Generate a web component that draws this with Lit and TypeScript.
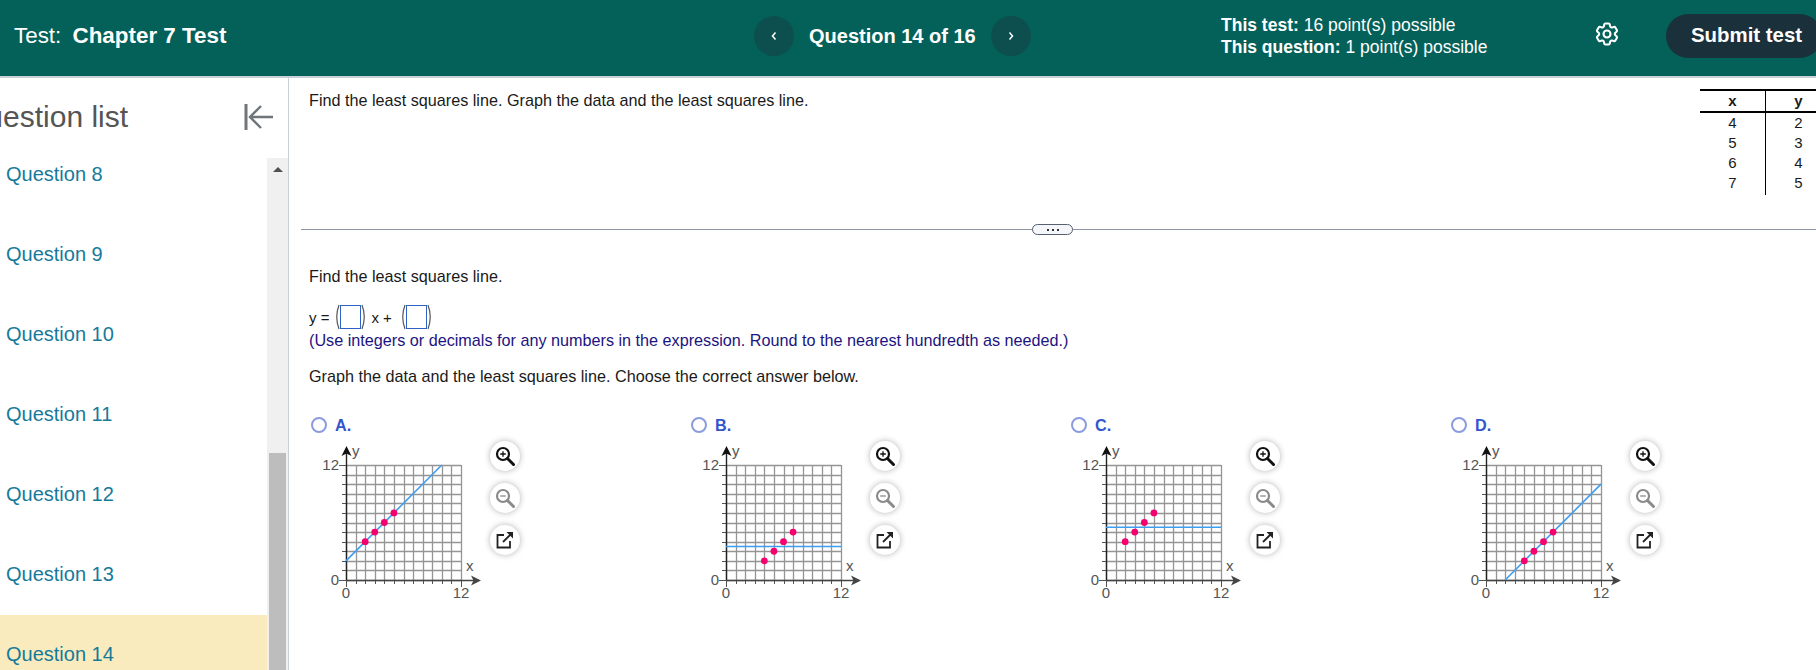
import { LitElement, html, css, svg } from 'lit';
import { customElement, property } from 'lit/decorators.js';

const UNIT = 115 / 12;
const X0 = 35;
const Y0 = 139;
const px = (x: number) => X0 + x * UNIT;
const py = (y: number) => Y0 - y * UNIT;
// grid lines in the original land on whole pixels
const snap = (v: number) => Math.round(v) + 0.5;

const OPTIONS = [
  { key: 'A', line: [0, 2, 10, 12], points: [[2, 4], [3, 5], [4, 6], [5, 7]] },
  { key: 'B', line: [0, 3.5, 12, 3.5], points: [[4, 2], [5, 3], [6, 4], [7, 5]] },
  { key: 'C', line: [0, 5.5, 12, 5.5], points: [[2, 4], [3, 5], [4, 6], [5, 7]] },
  { key: 'D', line: [2, 0, 12, 10], points: [[4, 2], [5, 3], [6, 4], [7, 5]] },
];

@customElement('mini-graph')
export class MiniGraph extends LitElement {
  static styles = css`
    :host {
      display: block;
    }
    svg {
      display: block;
    }
    text {
      font-family: 'Liberation Sans', Arial, sans-serif;
      font-size: 15px;
      fill: #555;
    }
  `;

  @property({ type: Array }) line: number[] = [];
  @property({ type: Array }) points: number[][] = [];

  render() {
    const steps = Array.from({ length: 13 }, (_, i) => i);
    const [x1, y1, x2, y2] = this.line;
    return html`
      <svg width="175" height="160" viewBox="0 0 175 160">
        ${steps.map(
          (i) => svg`
            <line x1=${snap(px(i))} y1=${py(0)} x2=${snap(px(i))} y2=${py(12)} stroke="#959595" stroke-width="1.3" />
            <line x1=${px(0)} y1=${snap(py(i))} x2=${px(12)} y2=${snap(py(i))} stroke="#959595" stroke-width="1.3" />
            <line x1=${snap(px(i))} y1=${py(0)} x2=${snap(px(i))} y2=${py(0) + 4} stroke="#555" />
            <line x1=${px(0) - 4} y1=${snap(py(i))} x2=${px(0)} y2=${snap(py(i))} stroke="#555" />
          `
        )}
        <line x1=${px(0) - 7} y1=${snap(py(12))} x2=${px(0)} y2=${snap(py(12))} stroke="#555" />
        <line x1=${px(0) - 7} y1=${snap(py(0))} x2=${px(0)} y2=${snap(py(0))} stroke="#555" />
        <line x1=${snap(px(0))} y1=${py(0) + 7} x2=${snap(px(0))} y2=${py(0)} stroke="#555" />
        <line x1=${snap(px(12))} y1=${py(0) + 7} x2=${snap(px(12))} y2=${py(0)} stroke="#555" />
        <line x1=${snap(px(0))} y1=${py(0)} x2=${snap(px(0))} y2="10" stroke="#222" stroke-width="1.4" />
        <path d="M${snap(px(0))} 5 L${snap(px(0)) + 5} 15 L${snap(px(0))} 12.5 L${snap(px(0)) - 5} 15 Z" fill="#111" />
        <line x1=${px(0)} y1=${snap(py(0))} x2=${px(12) + 14} y2=${snap(py(0))} stroke="#444" stroke-width="1.4" />
        <path d="M170 ${snap(py(0))} L160 ${snap(py(0)) - 5} L162.5 ${snap(py(0))} L160 ${snap(py(0)) + 5} Z" fill="#444" />
        <line x1=${px(x1)} y1=${py(y1)} x2=${px(x2)} y2=${py(y2)} stroke="#3d9df0" stroke-width="1.6" />
        ${this.points.map(
          ([x, y]) => svg`<circle cx=${px(x)} cy=${py(y)} r="3.4" fill="#f5006e" />`
        )}
        <text x=${px(0) + 6} y="15">y</text>
        <text x=${px(12) + 5} y=${py(0) - 9}>x</text>
        <text x=${px(0) - 7} y=${py(12) + 5} text-anchor="end">12</text>
        <text x=${px(0) - 7} y=${py(0) + 5} text-anchor="end">0</text>
        <text x=${px(0)} y=${py(0) + 18} text-anchor="middle">0</text>
        <text x=${px(12)} y=${py(0) + 18} text-anchor="middle">12</text>
      </svg>
    `;
  }
}

@customElement('app-root')
export class AppRoot extends LitElement {
  static styles = css`
    :host {
      display: block;
      width: 1816px;
      height: 670px;
      overflow: hidden;
      font-family: 'Liberation Sans', Arial, sans-serif;
      background: #fff;
      color: #1a1a1a;
    }
    .top {
      height: 76px;
      background: #04615a;
      border-bottom: 2px solid #c9d1d6;
      display: flex;
      align-items: center;
      color: #fff;
      overflow: hidden;
    }
    .title {
      flex: 0 0 754px;
      padding-left: 14px;
      margin-top: -5px;
      font-size: 22.4px;
      box-sizing: border-box;
    }
    .title b {
      margin-left: 5px;
    }
    .nav {
      flex: 0 0 467px;
      display: flex;
      align-items: center;
      margin-top: -4px;
      font-size: 20px;
      font-weight: bold;
    }
    .round {
      width: 40px;
      height: 40px;
      border-radius: 50%;
      background: #0d4f4e;
      display: flex;
      align-items: center;
      justify-content: center;
    }
    .nav span {
      margin: 0 15px;
    }
    .info {
      flex: 0 0 372px;
      font-size: 17.5px;
      line-height: 22px;
      margin-top: -4px;
    }
    .gear {
      flex: 0 0 73px;
      margin-top: -8px;
    }
    .gear svg {
      display: block;
    }
    .submit {
      flex: 0 0 156px;
      box-sizing: border-box;
      height: 44px;
      margin-top: -4px;
      border-radius: 22px;
      background: #1a303a;
      font-size: 20.4px;
      font-weight: bold;
      line-height: 42px;
      padding-left: 25px;
    }
    .body {
      display: flex;
      height: 592px;
    }
    .side {
      flex: 0 0 288px;
      border-right: 1px solid #c8d0dc;
      display: flex;
      flex-direction: column;
      overflow: hidden;
    }
    .side-head {
      flex: 0 0 80px;
      display: flex;
      align-items: center;
      justify-content: space-between;
      padding: 0 14px 2px 0;
      box-sizing: border-box;
      color: #555;
    }
    .side-head h2 {
      margin: 0 0 0 -37px;
      font-size: 30px;
      font-weight: normal;
      white-space: nowrap;
    }
    .side-main {
      flex: 1;
      display: flex;
      min-height: 0;
    }
    .list {
      flex: 1;
      overflow: hidden;
    }
    .list-inner {
      margin-top: -23px;
    }
    .item {
      height: 80px;
      box-sizing: border-box;
      padding: 0 0 2px 6px;
      display: flex;
      align-items: center;
      font-size: 20px;
      color: #167a9b;
    }
    .item.current {
      background: #f9ebbd;
    }
    .bar {
      flex: 0 0 21px;
      background: #f0f0f0;
      display: flex;
      flex-direction: column;
      align-items: center;
    }
    .arrow {
      width: 0;
      height: 0;
      margin-top: 9px;
      border-left: 5px solid transparent;
      border-right: 5px solid transparent;
      border-bottom: 5px solid #505050;
    }
    .thumb {
      width: 17px;
      height: 300px;
      margin-top: 281px;
      background: #bdbdbd;
    }
    .main {
      flex: 1;
      min-width: 0;
      overflow: hidden;
      font-size: 16.2px;
    }
    .stem {
      height: 151px;
      padding-left: 20px;
      display: flex;
      justify-content: space-between;
      align-items: flex-start;
    }
    .stem p {
      margin: 13px 0 0;
    }
    table {
      margin: 11px -15px 0 0;
      border-collapse: collapse;
      font-size: 15px;
      line-height: 20px;
      text-align: center;
    }
    th,
    td {
      width: 65px;
      padding: 0;
      height: 20px;
    }
    tr:last-child td {
      height: 22px;
      vertical-align: top;
    }
    th {
      border-top: 2px solid #000;
      border-bottom: 2px solid #000;
      font-weight: bold;
    }
    th:first-child,
    td:first-child {
      border-right: 1px solid #000;
    }
    .rule {
      height: 1px;
      background: #8a95a0;
      margin-left: 12px;
      position: relative;
    }
    .handle {
      position: absolute;
      left: 731px;
      top: -5px;
      width: 41px;
      height: 11px;
      box-sizing: border-box;
      border: 1px solid #55616e;
      border-radius: 6px;
      background: #f5f6fa;
      display: flex;
      align-items: center;
      justify-content: center;
      gap: 3px;
    }
    .handle i {
      width: 2px;
      height: 2px;
      background: #333;
    }
    .answer {
      padding-left: 20px;
    }
    .answer p {
      margin: 0;
    }
    .q1 {
      padding-top: 37px;
    }
    .eq {
      display: flex;
      align-items: center;
      font-size: 15px;
      margin-top: 18px;
      height: 26px;
    }
    .box {
      width: 21px;
      height: 24px;
      box-sizing: border-box;
      border: 1px solid #2f62c4;
      background: #fff;
    }
    .paren {
      display: block;
    }
    .eq .gap1 {
      margin-right: 5px;
    }
    .eq .gap2 {
      margin: 0 8px 0 4px;
    }
    .hint {
      color: #1c1480;
      line-height: 20px;
      margin-top: 0 !important;
    }
    .q2 {
      margin-top: 16px !important;
      line-height: 20px;
    }
    .options {
      display: grid;
      grid-template-columns: repeat(4, 380px);
      padding-left: 22px;
      margin-top: 31px;
    }
    .head {
      display: flex;
      align-items: center;
      gap: 8px;
      height: 16px;
      font-size: 16.2px;
      font-weight: bold;
      color: #3355cc;
    }
    .radio {
      width: 16px;
      height: 16px;
      box-sizing: border-box;
      border: 2px solid #8b9be0;
      border-radius: 50%;
    }
    .plot {
      display: flex;
      margin-top: 8px;
    }
    .tools {
      margin-left: 4px;
      display: flex;
      flex-direction: column;
      gap: 12px;
    }
    .tool {
      width: 30px;
      height: 30px;
      border-radius: 50%;
      background: #fff;
      box-shadow: 0 0 6px rgba(0, 0, 0, 0.3);
      display: flex;
      align-items: center;
      justify-content: center;
    }
  `;

  renderTools() {
    return html`
      <div class="tools">
        <div class="tool">
          <svg width="22" height="22" viewBox="0 0 22 22" fill="none" stroke="#111">
            <circle cx="9" cy="9" r="6" stroke-width="2.2" />
            <path d="M13.5 13.5 L19.5 19.5" stroke-width="3" stroke-linecap="round" />
            <path d="M6.2 9h5.6M9 6.2v5.6" stroke-width="1.3" />
          </svg>
        </div>
        <div class="tool">
          <svg width="22" height="22" viewBox="0 0 22 22" fill="none" stroke="#8a8a8a">
            <circle cx="9" cy="9" r="6" stroke-width="2.2" />
            <path d="M13.5 13.5 L19.5 19.5" stroke-width="3" stroke-linecap="round" />
            <path d="M6.2 9h5.6" stroke-width="1.3" />
          </svg>
        </div>
        <div class="tool">
          <svg width="20" height="20" viewBox="0 0 20 20" fill="none" stroke="#222" stroke-width="1.8">
            <path d="M9 5H2.5V17.5H15V11" />
            <path d="M8 12 L16 4" />
            <path d="M11.5 2H18V8.5Z" fill="#222" stroke="none" />
          </svg>
        </div>
      </div>
    `;
  }

  renderParen(open: boolean) {
    return html`
      <svg class="paren" width="6" height="26" viewBox="0 0 6 26" fill="none" stroke="#555" stroke-width="1.2">
        <path d=${open ? 'M5 1 Q0.5 13 5 25' : 'M1 1 Q5.5 13 1 25'} />
      </svg>
    `;
  }

  render() {
    const questions = [8, 9, 10, 11, 12, 13, 14];
    return html`
      <div class="top">
        <div class="title">Test: <b>Chapter 7 Test</b></div>
        <div class="nav">
          <div class="round">
            <svg width="8" height="12" viewBox="0 0 8 12" fill="none" stroke="#fff" stroke-width="1.5"><path d="M5.5 2.5 L2.5 6 L5.5 9.5" /></svg>
          </div>
          <span>Question 14 of 16</span>
          <div class="round">
            <svg width="8" height="12" viewBox="0 0 8 12" fill="none" stroke="#fff" stroke-width="1.5"><path d="M2.5 2.5 L5.5 6 L2.5 9.5" /></svg>
          </div>
        </div>
        <div class="info">
          <div><b>This test:</b> 16 point(s) possible</div>
          <div><b>This question:</b> 1 point(s) possible</div>
        </div>
        <div class="gear">
          <svg width="28" height="28" viewBox="0 0 24 24" fill="none" stroke="#fff" stroke-width="1.8" stroke-linejoin="round">
            <path d="M9.594 3.94c.09-.542.56-.94 1.11-.94h2.593c.55 0 1.02.398 1.11.94l.213 1.281c.063.374.313.686.645.87.074.04.147.083.22.127.325.196.72.257 1.075.124l1.217-.456a1.125 1.125 0 0 1 1.37.49l1.296 2.247a1.125 1.125 0 0 1-.26 1.431l-1.003.827c-.293.241-.438.613-.43.992a7.723 7.723 0 0 1 0 .255c-.008.378.137.75.43.991l1.004.827c.424.35.534.955.26 1.43l-1.298 2.247a1.125 1.125 0 0 1-1.369.491l-1.217-.456c-.355-.133-.75-.072-1.076.124a6.47 6.47 0 0 1-.22.128c-.331.183-.581.495-.644.869l-.213 1.281c-.09.543-.56.94-1.11.94h-2.594c-.55 0-1.019-.398-1.11-.94l-.213-1.281c-.062-.374-.312-.686-.644-.87a6.52 6.52 0 0 1-.22-.127c-.325-.196-.72-.257-1.076-.124l-1.217.456a1.125 1.125 0 0 1-1.369-.49l-1.297-2.247a1.125 1.125 0 0 1 .26-1.431l1.004-.827c.292-.24.437-.613.43-.991a6.932 6.932 0 0 1 0-.255c.007-.38-.138-.751-.43-.992l-1.004-.827a1.125 1.125 0 0 1-.26-1.43l1.297-2.247a1.125 1.125 0 0 1 1.37-.491l1.216.456c.356.133.751.072 1.076-.124.072-.044.146-.086.22-.128.332-.183.582-.495.644-.869l.214-1.28Z" />
            <circle cx="12" cy="12" r="3" />
          </svg>
        </div>
        <div class="submit">Submit test</div>
      </div>
      <div class="body">
        <div class="side">
          <div class="side-head">
            <h2>Question list</h2>
            <svg width="30" height="28" viewBox="0 0 30 28" fill="none" stroke="#6f7579" stroke-width="2.4">
              <path d="M2 1V27" stroke-width="3" />
              <path d="M29 14H7M17 3 L6 14 L17 25" />
            </svg>
          </div>
          <div class="side-main">
            <div class="list">
              <div class="list-inner">
                ${questions.map(
                  (n) => html`<div class="item ${n === 14 ? 'current' : ''}">Question ${n}</div>`
                )}
              </div>
            </div>
            <div class="bar">
              <div class="arrow"></div>
              <div class="thumb"></div>
            </div>
          </div>
        </div>
        <div class="main">
          <div class="stem">
            <p>Find the least squares line. Graph the data and the least squares line.</p>
            <table>
              <tr><th>x</th><th>y</th></tr>
              <tr><td>4</td><td>2</td></tr>
              <tr><td>5</td><td>3</td></tr>
              <tr><td>6</td><td>4</td></tr>
              <tr><td>7</td><td>5</td></tr>
            </table>
          </div>
          <div class="rule"><div class="handle"><i></i><i></i><i></i></div></div>
          <div class="answer">
            <p class="q1">Find the least squares line.</p>
            <div class="eq">
              <span class="gap1">y =</span>
              ${this.renderParen(true)}<div class="box"></div>${this.renderParen(false)}
              <span class="gap2">x +</span>
              ${this.renderParen(true)}<div class="box"></div>${this.renderParen(false)}
            </div>
            <p class="hint">(Use integers or decimals for any numbers in the expression. Round to the nearest hundredth as needed.)</p>
            <p class="q2">Graph the data and the least squares line. Choose the correct answer below.</p>
          </div>
          <div class="options">
            ${OPTIONS.map(
              (o) => html`
                <div>
                  <div class="head"><div class="radio"></div>${o.key}.</div>
                  <div class="plot">
                    <mini-graph .line=${o.line} .points=${o.points}></mini-graph>
                    ${this.renderTools()}
                  </div>
                </div>
              `
            )}
          </div>
        </div>
      </div>
    `;
  }
}
